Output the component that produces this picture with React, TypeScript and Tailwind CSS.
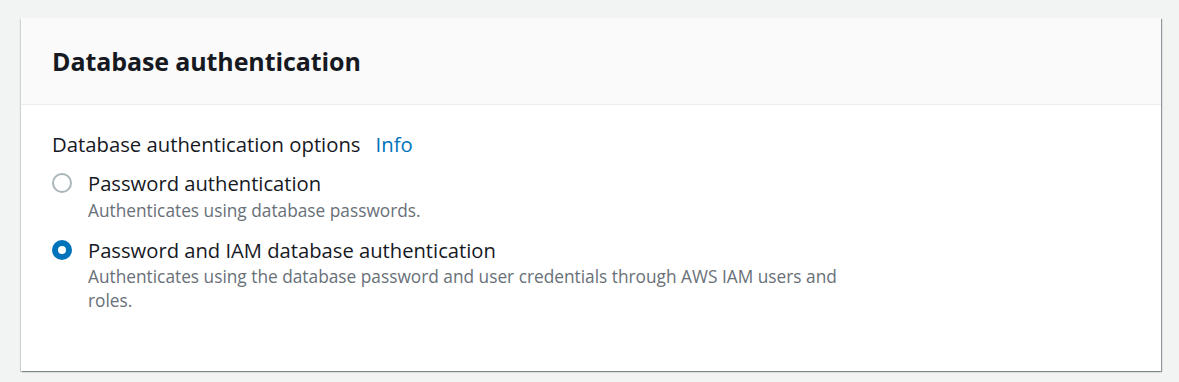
export default function App() {
    const font = { fontFamily: '"Open Sans", "Noto Sans", Arial, sans-serif' };
    return (
        <div className="w-[1179px] h-[382px] bg-[#f2f3f3] pt-[18px] pl-[21px]" style={font}>
            <div className="w-[1140px] h-[353px] bg-white shadow-[1px_1px_1px_0_rgba(0,28,36,0.3),1px_1px_1px_0_rgba(0,28,36,0.15),-1px_1px_1px_0_rgba(0,28,36,0.15)] flex flex-col">
                {/* Header */}
                <div className="h-[87px] bg-[#fafafa] border-b border-[#eaeded] flex items-center px-[31px]">
                    <h2 className="text-[25px] font-bold text-[#16191f] leading-none tracking-[-0.1px]">Database authentication</h2>
                </div>

                {/* Body */}
                <div className="px-[31px] pt-[26px]">
                    <div className="flex items-baseline gap-[15px] text-[20.3px] leading-[26px]">
                        <span className="text-[#16191f]">Database authentication options</span>
                        <a className="text-[#0073bb]">Info</a>
                    </div>

                    <div className="mt-[13px] flex flex-col gap-[14px]">
                        <label className="flex gap-[16px]">
                            <span className="mt-[3px] w-[20px] h-[20px] rounded-full border-2 border-[#aab7b8] bg-white shrink-0" />
                            <span className="flex flex-col">
                                <span className="text-[20.2px] leading-[26px] text-[#16191f]">Password authentication</span>
                                <span className="mt-[3px] text-[17.3px] leading-[24px] text-[#687078]">Authenticates using database passwords.</span>
                            </span>
                        </label>
                        <label className="flex gap-[16px]">
                            <span className="mt-[3px] w-[20px] h-[20px] rounded-full border-[6px] border-[#0073bb] bg-white shrink-0" />
                            <span className="flex flex-col">
                                <span className="text-[20.2px] leading-[26px] text-[#16191f]">Password and IAM database authentication</span>
                                <span className="mt-[2px] text-[17.3px] leading-[24px] text-[#687078] max-w-[770px]">
                                    Authenticates using the database password and user credentials through AWS IAM users and roles.
                                </span>
                            </span>
                        </label>
                    </div>
                </div>
            </div>
        </div>
    );
}
